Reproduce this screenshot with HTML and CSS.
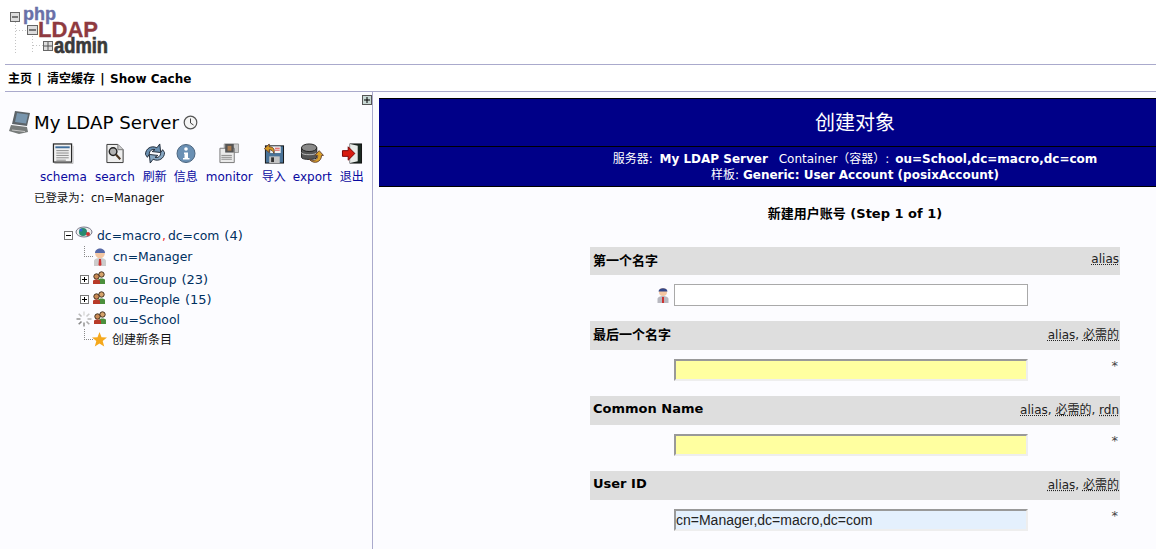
FILE: index.html
```html
<!DOCTYPE html>
<html lang="zh">
<head>
<meta charset="utf-8">
<title>phpLDAPadmin</title>
<link rel="stylesheet" href="styles.css">
</head>
<body>
<header class="top">
  <svg class="logo" width="120" height="64" viewBox="0 0 120 64">
    <g fill="none" stroke="#c4c4c4" stroke-dasharray="1 2"><path d="M15.500 22V54M16 30.500H27M32.500 36V54M33 45.500H43"/></g>
    <rect x="10.500" y="12.500" width="9" height="9" fill="#ddd" stroke="#666"/><path d="M12 17H18" stroke="#555" stroke-width="1.500"/>
    <rect x="27.500" y="25.500" width="10" height="9" fill="#ddd" stroke="#666"/><path d="M29 30H36" stroke="#555" stroke-width="1.500"/>
    <rect x="43.500" y="41.500" width="9" height="9" fill="#ddd" stroke="#666"/><path d="M48 42V50M44 46H52" stroke="#555"/>
    <text x="23" y="20" class="logo-php">php</text>
    <text x="38" y="37" class="logo-ldap" textLength="60" lengthAdjust="spacingAndGlyphs">LDAP</text>
    <text x="54" y="53" class="logo-admin" textLength="54" lengthAdjust="spacingAndGlyphs">admin</text>
  </svg>
</header>
<nav class="nav"><b>主页</b><span class="sep">|</span><b>清空缓存</b><span class="sep">|</span><b>Show Cache</b></nav>
<div class="main">
  <aside class="side">
    <svg class="collapse" width="10" height="10" viewBox="0 0 10 10"><rect x=".5" y=".5" width="9" height="9" fill="#c8d8d4" stroke="#555"/><path d="M5 2V8M2 5H8" stroke="#000"/></svg>
    <div class="server">
      <svg width="22" height="24" viewBox="0 0 22 24"><path d="M6 1L21 3L18 16L3 14Z" fill="#5c6368"/><path d="M8 3L19 4.500L17 13.500L6 12Z" fill="#7895ad"/><path d="M2 15L18 17L19 22L10 24L0 21Z" fill="#777b7a"/><path d="M3 20L16 21.500" stroke="#c8c8c8"/></svg>
      <span class="server-name">My LDAP Server</span>
      <svg width="15" height="15" viewBox="0 0 15 15"><circle cx="7.500" cy="7.500" r="6.300" fill="#f5f5f5" stroke="#555" stroke-width="1.200"/><path d="M7.500 3.500V8L10.500 10" fill="none" stroke="#444"/></svg>
    </div>
    <div class="tools">
      <a class="tool t1"><svg width="22" height="22" viewBox="0 0 22 22"><rect x="1" y="1" width="19" height="19" fill="#f0f0f0" stroke="#2a2a2a" stroke-width="1.300"/><path d="M3 4.500H18" stroke="#3f6e9c" stroke-width="2"/><path d="M4 8H17M4 10.500H17M4 13H17M4 15.500H17M4 18H14" stroke="#888"/><path d="M2 21.500H21.500V3" fill="none" stroke="#bbb"/></svg>schema</a>
      <a class="tool t2"><svg width="20" height="22" viewBox="0 0 20 22"><path d="M1.500 1.500H13L18.500 7V20.500H1.500Z" fill="#eee" stroke="#333"/><path d="M13 1.500V7H18.500" fill="#ccc" stroke="#777"/><circle cx="8" cy="9" r="4" fill="#b4b4b4" stroke="#222" stroke-width="1.500"/><path d="M11 12L15.500 17" stroke="#4a3520" stroke-width="2.200"/></svg>search</a>
      <a class="tool t3"><svg width="22" height="22" viewBox="0 0 22 22"><path d="M1 12C1 6 7 2 13 5L16 1L17 10L8 9L11 7C8 6 5 8 5 12L3 15Z" fill="#6a8fb0" stroke="#1f2a38"/><path d="M21 10C21 16 15 20 9 17L6 21L5 12L14 13L11 15C14 16 17 14 17 10L19 7Z" fill="#86a6c2" stroke="#1f2a38"/></svg>刷新</a>
      <a class="tool t4"><svg width="20" height="20" viewBox="0 0 20 20"><circle cx="10" cy="10" r="9" fill="#6a90b4" stroke="#4a647e"/><circle cx="10" cy="5.500" r="1.800" fill="#fff"/><path d="M8 9H12V14.500H13.500V16H7V14.500H8.500V10.500H8Z" fill="#fff"/></svg>信息</a>
      <a class="tool t5"><svg width="22" height="22" viewBox="0 0 22 22"><path d="M6 1H21V10H16V5H6Z" fill="#ccc" stroke="#999"/><path d="M1.500 5.500H16.500V20.500H1.500Z" fill="#eaeaea" stroke="#777"/><rect x="7" y="1" width="9" height="9" fill="#555"/><rect x="9.500" y="3" width="4" height="5" fill="#a87a50"/><path d="M3 13H14M3 15H14M3 17H14" stroke="#888"/></svg>monitor</a>
      <a class="tool t6"><svg width="22" height="22" viewBox="0 0 22 22"><rect x="2" y="3" width="19" height="18" fill="#4a7398" stroke="#111"/><rect x="7" y="3.500" width="11" height="7" fill="#f0f0f0"/><path d="M12 5.500H17M12 7.500H17" stroke="#d44"/><rect x="6" y="14" width="11" height="7" fill="#c4c4c4"/><rect x="8" y="15" width="3" height="5" fill="#333"/><path d="M1 6L6 1V4C10 4 12 6 11 11C10 8 8 7 6 7V10Z" fill="#d59a25" stroke="#643"/></svg>导入</a>
      <a class="tool t7"><svg width="24" height="22" viewBox="0 0 24 22"><path d="M1 5V15C1 18 17 18 17 15V5Z" fill="#555" stroke="#222"/><ellipse cx="9" cy="5" rx="8" ry="4" fill="#8a8a8a" stroke="#222"/><path d="M1 10C1 13 17 13 17 10" fill="none" stroke="#bbb"/><path d="M9 17C15 20 18 17 18 13H15L19.500 8L24 13H22C22 20 14 23 9 17Z" fill="#d9a02a" stroke="#643"/></svg>export</a>
      <a class="tool t8"><svg width="22" height="22" viewBox="0 0 22 22"><rect x="9" y="1" width="12" height="20" fill="#1c2a22" stroke="#111"/><path d="M9 1L17 3V19L9 21Z" fill="#e8ebe8"/><path d="M1 8H7V4L14 11L7 18V14H1Z" fill="#d81c10" stroke="#700"/></svg>退出</a>
    </div>
    <p class="logged">已登录为：cn=Manager</p>
    <ul class="tree">
      <li class="node n-root">
        <svg class="tog" width="9" height="9" viewBox="0 0 9 9"><rect x=".5" y=".5" width="8" height="8" fill="#fff" stroke="#777"/><path d="M2 4.500H7" stroke="#000"/></svg>
        <svg class="ico" width="18" height="14" viewBox="0 0 18 14"><ellipse cx="9" cy="6" rx="8" ry="5" fill="#eee" stroke="#778"/><circle cx="8" cy="6" r="4" fill="#2a8a70"/><circle cx="13" cy="8" r="2" fill="#c33"/><circle cx="6" cy="4" r="1.500" fill="#36c"/></svg>
        <span class="dn">dc=macro<i class="comma">,</i>dc=com <span class="count">(4)</span></span>
      </li>
      <li class="node n-child n-manager">
        <span class="dots"></span>
        <svg class="ico-p" width="14" height="19" viewBox="0 0 14 19"><path d="M1 19V14C1 12 4 11 7 11S13 12 13 14V19Z" fill="#ccc"/><path d="M6 12H8L8.500 18L7 19L5.500 18Z" fill="#c33"/><circle cx="7" cy="6.500" r="4.800" fill="#f3c6a2"/><path d="M2 6C2 0 12 0 12 6Z" fill="#5468a8"/></svg>
        <span class="dn">cn=Manager</span>
      </li>
      <li class="node n-child n-group">
        <svg class="tog" width="9" height="9" viewBox="0 0 9 9"><rect x=".5" y=".5" width="8" height="8" fill="#fff" stroke="#777"/><path d="M2 4.500H7M4.500 2V7" stroke="#000"/></svg>
        <svg class="ico-g" width="14" height="14" viewBox="0 0 14 14"><circle cx="9.500" cy="3.500" r="2.700" fill="#d6a36c" stroke="#432"/><path d="M6 13V9C6 7 13 7 13 9V13Z" fill="#4c8f3c"/><circle cx="4.500" cy="5.500" r="2.700" fill="#c98a55" stroke="#432"/><path d="M1 13V10C1 8 8 8 8 10V13Z" fill="#b83a28"/></svg>
        <span class="dn">ou=Group <span class="count">(23)</span></span>
      </li>
      <li class="node n-child">
        <svg class="tog" width="9" height="9" viewBox="0 0 9 9"><rect x=".5" y=".5" width="8" height="8" fill="#fff" stroke="#777"/><path d="M2 4.500H7M4.500 2V7" stroke="#000"/></svg>
        <svg class="ico-g" width="14" height="14" viewBox="0 0 14 14"><circle cx="9.500" cy="3.500" r="2.700" fill="#d6a36c" stroke="#432"/><path d="M6 13V9C6 7 13 7 13 9V13Z" fill="#4c8f3c"/><circle cx="4.500" cy="5.500" r="2.700" fill="#c98a55" stroke="#432"/><path d="M1 13V10C1 8 8 8 8 10V13Z" fill="#b83a28"/></svg>
        <span class="dn">ou=People <span class="count">(15)</span></span>
      </li>
      <li class="node n-child">
        <svg class="spin" width="16" height="16" viewBox="0 0 16 16"><g stroke-width="1.600"><path d="M8 .5V4.500" stroke="#ddd"/><path d="M13.300 2.700L10.500 5.500" stroke="#ccc"/><path d="M15.500 8H11.500" stroke="#bbb"/><path d="M13.300 13.300L10.500 10.500" stroke="#aaa"/><path d="M8 15.500V11.500" stroke="#999"/><path d="M2.700 13.300L5.500 10.500" stroke="#888"/><path d="M.5 8H4.500" stroke="#999"/><path d="M2.700 2.700L5.500 5.500" stroke="#bbb"/></g></svg>
        <svg class="ico-g" width="14" height="14" viewBox="0 0 14 14"><circle cx="9.500" cy="3.500" r="2.700" fill="#d6a36c" stroke="#432"/><path d="M6 13V9C6 7 13 7 13 9V13Z" fill="#4c8f3c"/><circle cx="4.500" cy="5.500" r="2.700" fill="#c98a55" stroke="#432"/><path d="M1 13V10C1 8 8 8 8 10V13Z" fill="#b83a28"/></svg>
        <span class="dn">ou=School</span>
      </li>
      <li class="node n-child">
        <span class="dots"></span>
        <svg class="ico-s" width="15" height="15" viewBox="0 0 15 15"><path d="M7.500 0L9.500 5.300L15 5.600L10.700 9L12.200 14.500L7.500 11.400L2.800 14.500L4.300 9L0 5.600L5.500 5.300Z" fill="#f5a81c"/></svg>
        <span class="new">创建新条目</span>
      </li>
    </ul>
  </aside>
  <main class="content">
    <div class="inner">
      <div class="title">创建对象</div>
      <div class="sub"><span class="sub-server">服务器:</span> <b>My LDAP Server</b> <span class="sub-gap">Container（容器）:</span> <b>ou=School,dc=macro,dc=com</b><br>样板: <b>Generic: User Account (posixAccount)</b></div>
      <h4 class="step">新建用户账号 (Step 1 of 1)</h4>
      <div class="form">
        <div class="attr attr-first"><b>第一个名字</b><span class="hints"><u>alias</u></span></div>
        <div class="row">
          <svg class="field-ico" width="12" height="16" viewBox="0 0 12 16"><path d="M.5 16V12C.5 10 3.500 9 6 9S11.500 10 11.500 12V16Z" fill="#b8b8c0"/><path d="M5 10H7V16H5Z" fill="#c33"/><circle cx="6" cy="5" r="4" fill="#f3c6a2"/><path d="M1.500 4.500C1.500 0 10.500 0 10.500 4.500Z" fill="#33478a"/></svg>
          <input class="inp plain" type="text">
        </div>
        <div class="attr"><b>最后一个名字</b><span class="hints"><u>alias</u>, <u>必需的</u></span></div>
        <div class="row"><input class="inp req" type="text"><span class="star">*</span></div>
        <div class="attr"><b>Common Name</b><span class="hints"><u>alias</u>, <u>必需的</u>, <u>rdn</u></span></div>
        <div class="row"><input class="inp req" type="text"><span class="star">*</span></div>
        <div class="attr"><b>User ID</b><span class="hints"><u>alias</u>, <u>必需的</u></span></div>
        <div class="row"><input class="inp auto" type="text" value="cn=Manager,dc=macro,dc=com"><span class="star">*</span></div>
      </div>
    </div>
  </main>
</div>
</body>
</html>
```
FILE: styles.css
```css
html, body { margin: 0; height: 549px; overflow: hidden; background: #fff; }
body { font-family: "DejaVu Sans", "Noto Sans CJK SC", sans-serif; font-size: 12px; color: #000; }
.top { height: 64px; }
.logo { display: block; }
.logo-php { font: bold 18px "Liberation Sans", sans-serif; fill: #6a70a8; stroke: #6a70a8; stroke-width: .4px; }
.logo-ldap { font: bold 22px "Liberation Sans", sans-serif; fill: #8f3a40; stroke: #8f3a40; stroke-width: .3px; }
.logo-admin { font: bold 22px "Liberation Sans", sans-serif; fill: #3a3a3a; stroke: #3a3a3a; stroke-width: .7px; }
.nav { margin: 0 0 0 5px; height: 26px; line-height: 28px; border-top: 1px solid #aaaacc; border-bottom: 1px solid #aaaacc; padding-left: 3px; font-size: 12px; }
.sep { margin: 0 5.300px; font-weight: bold; }
.main { display: flex; height: 457px; background: #fcfcff; }
.side { position: relative; width: 372px; border-right: 1px solid #aaaacc; flex: none; }
.collapse { position: absolute; right: 0; top: 3px; }
.server { display: flex; align-items: center; gap: 3px; margin: 17px 0 0 9px; height: 26px; }
.server-name { font-size: 18.2px; margin-right: 1px; }
.tools { display: flex; margin: 8px 0 0 34px; }
.tool { display: flex; flex-direction: column; align-items: center; color: #0a0aa0; font-size: 12px; height: 42px; gap: 5px; line-height: 16px; }
.tool svg { height: 22px; }
.t1 { margin-left: 6px; } .t2 { margin-left: 8px; } .t3 { margin-left: 8px; } .t4 { margin-left: 7px; }
.t5 { margin-left: 8px; } .t6 { margin-left: 9px; } .t7 { margin-left: 7px; } .t8 { margin-left: 8px; }
.logged { margin: 5px 0 0 34px; font-size: 11.400px; color: #111; line-height: 16px; }
.tree { list-style: none; margin: 19px 0 0 64px; padding: 0; }
.node { display: flex; align-items: center; height: 20px; position: relative; }
.n-root, .n-manager { height: 21px; }
.n-group { margin-top: 2px; }
.tog { flex: none; }
.n-root .ico { margin: -6px 4px 0 2px; flex: none; }
.n-child { padding-left: 16px; }
.n-child .tog { margin-right: 3px; }
.ico-g { margin: -2px 7px 0 0; flex: none; }
.spin + .ico-g { margin-right: 6px; }
.ico-p { margin-left: 13px; margin-right: 6px; flex: none; }
.ico-s { margin-left: 12px; margin-right: 5px; flex: none; }
.dots { position: absolute; left: 20px; top: 0; height: 10px; width: 8px; border-left: 1px dotted #888; border-bottom: 1px dotted #888; }
.spin { margin-left: -4px; margin-right: 1px; flex: none; }
.dn { color: #00305f; font-size: 12.400px; white-space: nowrap; }
.count { font-size: 13px; margin-left: 1px; }
.comma { color: #e33; font-style: normal; padding: 0 2px 0 1px; }
.new { font-size: 12px; color: #111; margin-top: -2px; }
.content { flex: 1; margin-left: 6px; min-width: 0; overflow: hidden; }
.inner { width: 952px; }
.title { background: #000088; color: #fff; text-align: center; font-size: 20px; height: 47px; line-height: 49px; border-top: 1px solid #000; border-bottom: 1px solid #000; margin-top: 6px; }
.sub { background: #000088; color: #fff; text-align: center; font-size: 12px; line-height: 16px; height: 35px; padding-top: 4px; border-bottom: 1px solid #000; }
.sub-server { margin-right: 3px; }
.sub-gap { margin: 0 2px 0 7px; }
.step { font-size: 13px; font-weight: bold; text-align: center; margin: 18px 0 0; line-height: 18px; }
.form { width: 530px; margin: 24px auto 0; }
.attr { display: flex; justify-content: space-between; align-items: center; background: #dedede; height: 29px; box-sizing: border-box; padding: 0 1px 5px 3px; font-size: 13px; }
.attr-first { height: 28px; padding-bottom: 3px; }
.attr-first .hints { margin-top: -2px; }
.hints { font-size: 12px; color: #222; }
.hints u { text-decoration: underline dotted; }
.row { display: flex; align-items: flex-start; height: 46px; padding: 9px 0 0 84px; box-sizing: border-box; position: relative; }
.inp { width: 354px; height: 22px; box-sizing: border-box; margin: 0; padding: 0; font: 14px "Liberation Sans", sans-serif; color: #222; }
.plain { background: #fff; border: 1px solid #a9a9a9; }
.req, .auto { border: 2px solid; border-color: #999 #eee #eee #999; }
.req { background: #ffffa0; }
.auto { background: #e4f0fd; }
.field-ico { position: absolute; left: 67px; top: 12px; }
.star { position: absolute; right: 2px; top: 8px; font-size: 13px; color: #444; }
```
